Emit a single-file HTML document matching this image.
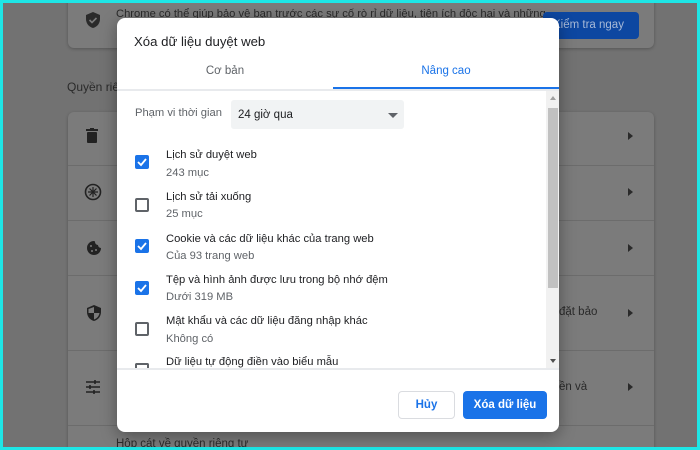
<!DOCTYPE html>
<html><head><meta charset="utf-8"><style>
*{box-sizing:border-box;margin:0;padding:0}
body{width:700px;height:450px;overflow:hidden;background:#1ee6e6;font-family:"Liberation Sans",sans-serif;position:relative}
#bg{position:absolute;left:3px;top:3px;width:694px;height:444px;background:#727272;overflow:hidden}
.card{position:absolute;background:#7b7b7b;border-radius:6px;box-shadow:0 1px 3px rgba(0,0,0,.25)}
.t{position:absolute;font-size:12px;color:#2a2a2a;white-space:nowrap}
.sep{position:absolute;left:65px;width:586px;height:1px;background:#6c6c6c}
.arr{position:absolute;left:625px;width:0;height:0;border-top:4px solid transparent;border-bottom:4px solid transparent;border-left:5px solid #2a2a2a}
#dlg{position:absolute;left:117px;top:18px;width:442px;height:414px;background:#fff;border-radius:8px;box-shadow:0 4px 16px rgba(0,0,0,.35)}
.cb{position:absolute;left:18px;width:14px;height:14px;border-radius:2px}
.on{background:#1a73e8}
.off{border:2px solid #5f6368}
.lbl{position:absolute;left:49px;font-size:11.2px;color:#202124;white-space:nowrap}
.sub{position:absolute;left:49px;font-size:11.2px;color:#5f6368;white-space:nowrap}
</style></head><body>
<div id="bg">
<div class="card" style="left:65px;top:-10px;width:586px;height:55px"></div>
<svg style="position:absolute;left:83px;top:9px" width="14" height="16" viewBox="0 0 14 16"><path d="M7 0L0 3v4c0 4.5 3 8 7 9 4-1 7-4.5 7-9V3z" fill="#2a2a2a"/><path d="M3.5 8l2.5 2.5 4.5-4.5" stroke="#7b7b7b" stroke-width="1.6" fill="none"/></svg>
<div class="t" style="left:113px;top:5px;font-size:11.2px">Chrome có thể giúp bảo vệ bạn trước các sự cố rò rỉ dữ liệu, tiện ích độc hại và những</div>
<div style="position:absolute;left:540px;top:9px;width:96px;height:27px;background:#0d47a1;border-radius:4px;color:#a7b9d6;font-size:11.5px;line-height:27px;padding-left:10px">Kiểm tra ngay</div>
<div class="t" style="left:64px;top:77px;font-size:12px">Quyền riê</div>
<div class="card" style="left:65px;top:109px;width:586px;height:360px"></div>
<div class="sep" style="top:162px"></div><div class="sep" style="top:217px"></div><div class="sep" style="top:272px"></div><div class="sep" style="top:347px"></div><div class="sep" style="top:422px"></div>
<svg style="position:absolute;left:83px;top:125px" width="12" height="15" viewBox="0 0 12 15"><rect x="0" y="1" width="12" height="2" fill="#222"/><rect x="4" y="0" width="4" height="2" fill="#222"/><rect x="1" y="4" width="10" height="11" rx="1" fill="#222"/></svg>
<svg style="position:absolute;left:81px;top:180px" width="18" height="18" viewBox="0 0 18 18"><circle cx="9" cy="9" r="7.5" stroke="#222" stroke-width="1.6" fill="none"/><path d="M9 4v10M4 9h10M5.5 5.5l7 7M12.5 5.5l-7 7" stroke="#222" stroke-width="1.2"/></svg>
<svg style="position:absolute;left:83px;top:237px" width="16" height="16" viewBox="0 0 16 16"><path d="M8 1a7 7 0 1 0 7 7 3 3 0 0 1-3-3 3 3 0 0 1-3-3 1 1 0 0 0-1-1z" fill="#222"/><circle cx="5" cy="6" r="1" fill="#7b7b7b"/><circle cx="6" cy="11" r="1" fill="#7b7b7b"/><circle cx="10" cy="10" r="1" fill="#7b7b7b"/></svg>
<svg style="position:absolute;left:84px;top:302px" width="14" height="16" viewBox="0 0 14 16"><path d="M7 0L0 3v4c0 4.5 3 8 7 9 4-1 7-4.5 7-9V3z" fill="#222"/><path d="M7 2v6h5.5C12 11 10 13.5 7 14.5V8H1.5V4z" fill="#7b7b7b"/></svg>
<svg style="position:absolute;left:83px;top:377px" width="14" height="14" viewBox="0 0 14 14"><path d="M0 2h14M0 7h14M0 12h14" stroke="#222" stroke-width="1.6"/><path d="M9 0v4M4 5v4M8 10v4" stroke="#222" stroke-width="1.6"/></svg>
<div class="t" style="left:556px;top:303px;font-size:11.5px">đặt bảo</div>
<div class="t" style="left:556px;top:378px;font-size:11.5px">ền và</div>
<div class="t" style="left:113px;top:435px;font-size:11.5px">Hộp cát về quyền riêng tư</div>
<div class="arr" style="top:129px"></div><div class="arr" style="top:185px"></div><div class="arr" style="top:241px"></div><div class="arr" style="top:306px"></div><div class="arr" style="top:380px"></div>
</div>
<div id="dlg">
<div style="position:absolute;left:17px;top:16px;font-size:13.2px;color:#202124">Xóa dữ liệu duyệt web</div>
<div style="position:absolute;left:0;top:47px;width:216px;text-align:center;font-size:11.5px;color:#5f6368">Cơ bản</div>
<div style="position:absolute;left:216px;top:47px;width:226px;text-align:center;font-size:11.5px;color:#1a73e8">Nâng cao</div>
<div style="position:absolute;left:216px;top:69px;width:226px;height:2px;background:#1a73e8"></div>
<div style="position:absolute;left:0;top:71px;width:442px;height:2px;background:#e8eaed"></div>
<div style="position:absolute;left:0;top:350px;width:442px;height:2px;background:#e8eaed"></div>
<div style="position:absolute;left:429px;top:73px;width:13px;height:277px;background:#f1f1f1"></div>
<div style="position:absolute;left:431px;top:90px;width:10px;height:180px;background:#c1c1c1"></div>
<div style="position:absolute;left:433px;top:78px;border-left:3px solid transparent;border-right:3px solid transparent;border-bottom:4px solid #a0a0a0"></div>
<div style="position:absolute;left:433px;top:341px;border-left:3px solid transparent;border-right:3px solid transparent;border-top:4px solid #505050"></div>
<div style="position:absolute;left:18px;top:89px;font-size:11.2px;color:#5f6368">Phạm vi thời gian</div>
<div style="position:absolute;left:114px;top:82px;width:173px;height:29px;background:#f1f3f4;border-radius:3px;font-size:11.5px;color:#202124;line-height:30px;padding-left:7px">24 giờ qua</div>
<div style="position:absolute;left:271px;top:95px;border-left:5px solid transparent;border-right:5px solid transparent;border-top:5px solid #5f6368"></div>
<div class="cb on" style="top:137px"></div><div class="lbl" style="top:131px">Lịch sử duyệt web</div><div class="sub" style="top:149px">243 mục</div>
<div class="cb off" style="top:180px"></div><div class="lbl" style="top:173px">Lịch sử tải xuống</div><div class="sub" style="top:190px">25 mục</div>
<div class="cb on" style="top:221px"></div><div class="lbl" style="top:215px">Cookie và các dữ liệu khác của trang web</div><div class="sub" style="top:232px">Của 93 trang web</div>
<div class="cb on" style="top:263px"></div><div class="lbl" style="top:256px">Tệp và hình ảnh được lưu trong bộ nhớ đệm</div><div class="sub" style="top:273px">Dưới 319 MB</div>
<div class="cb off" style="top:304px"></div><div class="lbl" style="top:297px">Mật khẩu và các dữ liệu đăng nhập khác</div><div class="sub" style="top:315px">Không có</div>
<div style="position:absolute;left:18px;top:345px;width:14px;height:5px;border:2px solid #5f6368;border-bottom:none;border-radius:2px 2px 0 0"></div><div class="lbl" style="top:338px">Dữ liệu tự động điền vào biểu mẫu</div>
<svg style="position:absolute;left:0;top:0;pointer-events:none" width="442" height="414"><g stroke="#fff" stroke-width="1.8" fill="none"><path d="M21 144l3 3 5-6"/><path d="M21 228l3 3 5-6"/><path d="M21 270l3 3 5-6"/></g></svg>
<div style="position:absolute;left:281px;top:373px;width:57px;height:28px;border:1px solid #dadce0;border-radius:4px;color:#1a73e8;font-size:11.5px;line-height:26px;text-align:center;font-weight:bold">Hủy</div>
<div style="position:absolute;left:346px;top:373px;width:84px;height:28px;background:#1a73e8;border-radius:4px;color:#fff;font-size:11.5px;line-height:28px;text-align:center;font-weight:bold">Xóa dữ liệu</div>
</div>
</body></html>
